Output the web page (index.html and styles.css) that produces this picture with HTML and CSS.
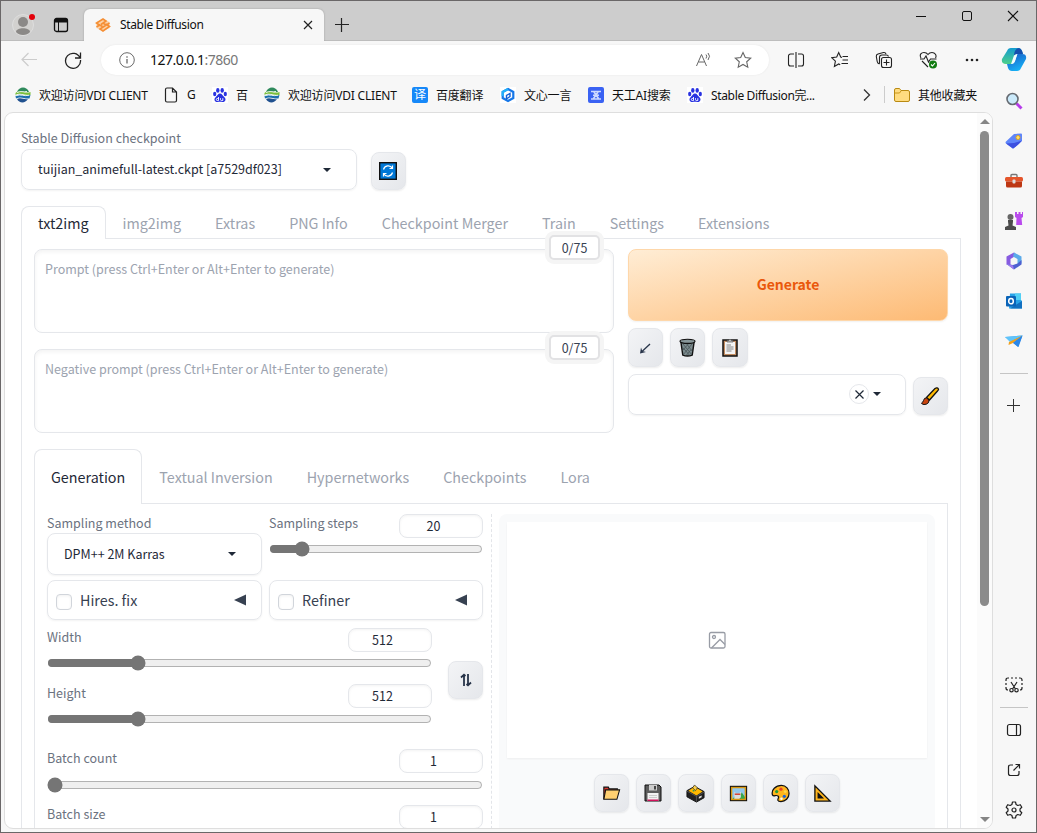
FILE: index.html
```html
<!DOCTYPE html>
<html lang="zh-CN">
<head>
  <meta charset="utf-8">
  <title>Stable Diffusion</title>
  <link rel="stylesheet" href="styles.css">
</head>
<body>
<svg class="defs" width="0" height="0">
  <symbol id="globe" viewBox="0 0 16 16">
    <path d="M2 5C4-1 12-1 14 5z" fill="#2f8a5c"/><path d="M.5 6c4-4 9 1 15-1v3C10 9 6 5 .5 8z" fill="#7bbf3c"/>
    <path d="M.5 9c5-3 9 1 15-1l-1 3.500C9 12 6 9 1 11.500z" fill="#1c6fae"/><path d="M2 12c4-2 7 1 11 0-3 5-9 4-11 0z" fill="#20518f"/>
    <path d="M2 5.500c4-2 6 0 10-1M1 8.700c5-2 8 1 13-.5" stroke="#e8f5ea" fill="none"/>
  </symbol>
  <symbol id="paw" viewBox="0 0 16 16">
    <rect width="16" height="16" fill="#fff"/>
    <g fill="#2932e1"><ellipse cx="2.700" cy="7" rx="1.600" ry="2.200"/><ellipse cx="5.800" cy="3.400" rx="1.700" ry="2.300"/><ellipse cx="10.200" cy="3.400" rx="1.700" ry="2.300"/><ellipse cx="13.300" cy="7" rx="1.600" ry="2.200"/><path d="M8 6.500c2 0 2.600 2 4 3.200 3 2.600 1 5.800-1.700 5.300-1.500-.3-3-.3-4.600 0C3 15.500 1 12.300 4 9.700 5.400 8.500 6 6.500 8 6.500z"/></g>
    <path d="M6.500 10v3.500H5.300a1 1 0 0 1 0-2h1.200M8.500 11.200v1.500q0 .8 1 .8h1.300v-2.300" stroke="#fff" fill="none" stroke-width=".9"/>
  </symbol>
  <symbol id="caret" viewBox="0 0 10 6"><path d="M1 1h8L5 5z" fill="#1f2937"/></symbol>
</svg>
<div class="window">
  <header class="titlebar">
    <svg class="profile" width="24" height="24" viewBox="0 0 24 24"><circle cx="11" cy="13" r="10.500" fill="#d2d1cf" stroke="#dedede"/><circle cx="11" cy="10" r="5" fill="#8b8987"/><path d="M4 20c0-5 14-5 14 0-3 4-11 4-14 0z" fill="#8b8987"/><circle cx="20" cy="5" r="3" fill="#e3000b"/></svg>
    <svg class="workspace" width="16" height="16" viewBox="0 0 16 16"><rect x="1.500" y="1.500" width="13" height="13" rx="2" fill="none" stroke="#111" stroke-width="1.300"/><path d="M2 2h12v3.500H2z" fill="#111"/><path d="M5.500 5v9" stroke="#111"/></svg>
    <div class="tab">
      <svg width="16" height="16" viewBox="0 0 16 16"><path d="M1.500 5 8 2l6.500 3v6L8 14l-6.500-3z" fill="#fbd3aa"/><g fill="none" stroke="#f58f35" stroke-width="1.600"><path d="M5 8.500 1.500 6 8 2l3 2-5 3.500M11 7l3.500 2.500L8 14l-3-2 5.500-3.500M1.500 10l3-2 3 1.500M14.500 6l-3 2-3-1.500"/></g></svg>
      <span class="tab-name">Stable Diffusion</span>
      <svg class="tab-close" width="10" height="10" viewBox="0 0 10 10"><path d="M1 1l8 8M9 1L1 9" stroke="#222" stroke-width="1.200"/></svg>
    </div>
    <svg class="new-tab" width="14" height="14" viewBox="0 0 14 14"><path d="M6.500 0v14M0 6.500h14" stroke="#222" stroke-width="1.200"/></svg>
    <div class="win-buttons">
      <svg width="12" height="12" viewBox="0 0 12 12"><path d="M1 6.500h10" stroke="#111"/></svg>
      <svg width="12" height="12" viewBox="0 0 12 12"><rect x="1.500" y="1.500" width="9" height="9" rx="1.500" fill="none" stroke="#111"/></svg>
      <svg width="12" height="12" viewBox="0 0 12 12"><path d="M1 1l10 10M11 1L1 11" stroke="#111" stroke-width="1.100"/></svg>
    </div>
  </header>

  <div class="below">
    <main class="main">
      <nav class="toolbar">
        <svg class="back" width="16" height="16" viewBox="0 0 16 16" fill="none" stroke="#ccc" stroke-width="1.200"><path d="M16 7.500H1M7.500 1 1 7.500 7.500 14"/></svg>
        <svg class="reload" width="18" height="18" viewBox="0 0 18 18" fill="none" stroke="#222" stroke-width="1.300"><path d="M16 7A7.500 7.500 0 1 0 16.500 9M16.500 1.500V7H11"/></svg>
        <div class="address">
          <svg width="16" height="16" viewBox="0 0 16 16" fill="none" stroke="#6a6a6a"><circle cx="8" cy="8" r="7.300"/><path d="M8 7v4.500M8 4.300v1.400" stroke-width="1.300"/></svg>
          <span class="url">127.0.0.1<i>:7860</i></span>
          <svg class="read" width="17" height="16" viewBox="0 0 17 16" fill="none" stroke="#666"><path d="M1.500 14 6.500 2.500 11.500 14M3.500 10h6M11 2.500q1.500 1.500 0 4M13 1q3 3 0 7"/></svg>
          <svg width="18" height="18" viewBox="0 0 18 18" fill="none" stroke="#666" stroke-width="1.100"><path d="M9 1.500l2.300 5 5.400.6-4 3.700 1.100 5.400L9 13.500l-4.800 2.700 1.100-5.400-4-3.700 5.400-.6z"/></svg>
        </div>
        <div class="tools">
          <svg width="18" height="18" viewBox="0 0 18 18" fill="none" stroke="#222" stroke-width="1.100"><path d="M9 1v16M7 3H3.500a2 2 0 0 0-2 2v8a2 2 0 0 0 2 2H7M11 3h3.500a2 2 0 0 1 2 2v8a2 2 0 0 1-2 2H11"/></svg>
          <svg width="18" height="18" viewBox="0 0 18 18" fill="none" stroke="#222" stroke-width="1.100"><path d="M11 6.500 9.700 6 7.700 1.500 5.700 6l-5 .7 3.700 3.500-1 5.300 4.300-2.500 1.500.8M11.500 5.500H17M11.500 9H17M10.500 12.500H17"/></svg>
          <svg width="18" height="18" viewBox="0 0 18 18" fill="none" stroke="#222" stroke-width="1.100"><rect x="6.500" y="6.500" width="10" height="10" rx="2"/><path d="M11.500 8.500v6M8.500 11.500h6M4.500 13q-2-.5-2.300-2.500L1.300 5.500q-.2-2 1.700-2.500l5.500-1.500q2-.3 2.500 1.500M4.500 12.500V6.500q0-2.500 2.500-2.500h4.500q1.500 0 2 1.500"/></svg>
          <svg width="19" height="18" viewBox="0 0 19 18" fill="none" stroke="#222" stroke-width="1.100"><path d="M2 7C0 3.500 2.500 1.500 5 1.500q2.500 0 4 2 1.500-2 4-2c3 0 5 3 3.500 5.500M1 8h4L7 5l2.500 6L11.500 8h6M3 10l6 6"/><circle cx="14" cy="13.500" r="4" fill="#107c10" stroke="none"/><path d="M12 13.500l1.500 1.500 2.500-3" stroke="#fff"/></svg>
          <svg width="16" height="4" viewBox="0 0 16 4" fill="#222"><circle cx="3" cy="2" r="1.300"/><circle cx="8" cy="2" r="1.300"/><circle cx="13" cy="2" r="1.300"/></svg>
        </div>
      </nav>

      <nav class="bookmarks">
        <a class="bm bm-vdi"><svg width="16" height="16"><use href="#globe"/></svg>欢迎访问VDI CLIENT</a>
        <a class="bm bm-g"><svg width="14" height="16" viewBox="0 0 14 16" fill="none" stroke="#222" stroke-width="1.200"><path d="M1.500 2.500q0-1.500 1.500-1.500h5.500l4 4V13.500q0 1.500-1.500 1.500H3q-1.500 0-1.500-1.500zM8.500 1v4h4"/></svg>G</a>
        <a class="bm bm-bai"><svg width="16" height="16"><use href="#paw"/></svg>百</a>
        <a class="bm bm-vdi2"><svg width="16" height="16"><use href="#globe"/></svg>欢迎访问VDI CLIENT</a>
        <a class="bm bm-fanyi"><b class="yi">译</b>百度翻译</a>
        <a class="bm bm-wenxin"><svg width="16" height="16" viewBox="0 0 16 16"><rect width="16" height="16" fill="#fff"/><path d="M8 2l5.300 3v6L8 14l-5.300-3V5z" fill="none" stroke="#1677e8" stroke-width="2.200"/><path d="M8 2 2.700 5v4" fill="none" stroke="#22b0fa" stroke-width="2.200"/><path d="M6.500 12V8.500l3.500-2v3z" fill="none" stroke="#1560d8" stroke-width="1.400"/></svg>文心一言</a>
        <a class="bm bm-tg"><svg width="16" height="16" viewBox="0 0 16 16"><rect width="16" height="16" rx="2" fill="#3a62f3"/><path d="M3 4.500h10M3 12h10M5 8.200h6M6 5l4.500 6.500M10 5l-4.500 6.500" stroke="#cdd9ff" stroke-width="1.600"/></svg>天工AI搜索</a>
        <a class="bm bm-sd"><svg width="16" height="16"><use href="#paw"/></svg>Stable Diffusion完...</a>
        <svg class="more" width="8" height="12" viewBox="0 0 8 12"><path d="M1 .5 6.500 6 1 11.500" fill="none" stroke="#333" stroke-width="1.300"/></svg>
        <a class="bm bm-other"><svg width="16" height="14" viewBox="0 0 16 14"><path d="M.5 2Q.5.5 2 .5h3.500L7 2.500h7q1.500 0 1.500 1.500v8q0 1.500-1.500 1.500H2Q.5 13.500.5 12z" fill="#ffdc80" stroke="#b98a12"/><path d="M1 5h4.500L7 3" fill="none" stroke="#c9961b"/></svg>其他收藏夹</a>
      </nav>

      <section class="webview">
        <div class="page">
          <div class="label ckpt-label">Stable Diffusion checkpoint</div>
          <div class="row ckpt-row">
            <div class="select ckpt"><span>tuijian_animefull-latest.ckpt [a7529df023]</span><svg width="10" height="6"><use href="#caret"/></svg></div>
            <button class="tool"><svg width="18" height="18" viewBox="0 0 18 18"><rect x=".700" y=".700" width="16.600" height="16.600" fill="#0078d7" stroke="#111" stroke-width="1.400"/><path d="M4.500 7.500a4.800 4.800 0 0 1 8.800-1.300M13.500 10.500a4.800 4.800 0 0 1-8.800 1.300M13.500 3.500v3h-3M4.500 14.500v-3h3" fill="none" stroke="#fff" stroke-width="1.200"/></svg></button>
          </div>

          <div class="tabs tabs-main">
            <span class="on">txt2img</span><span>img2img</span><span>Extras</span><span>PNG Info</span><span>Checkpoint Merger</span><span>Train</span><span>Settings</span><span>Extensions</span>
          </div>

          <div class="panel">
            <div class="top">
              <div class="prompts">
                <div class="prompt">Prompt (press Ctrl+Enter or Alt+Enter to generate)<span class="counter">0/75</span></div>
                <div class="prompt">Negative prompt (press Ctrl+Enter or Alt+Enter to generate)<span class="counter">0/75</span></div>
              </div>
              <div class="actions">
                <button class="generate">Generate</button>
                <div class="row gap">
                  <button class="tool"><svg width="14" height="14" viewBox="0 0 14 14"><path d="M12 3 4 10.500" fill="none" stroke="#273449" stroke-width="1.300"/><path d="M2 12.500 3 6.500l1.300 3.500 3.700 1z" fill="#273449"/></svg></button>
                  <button class="tool"><svg width="17" height="19" viewBox="0 0 18 20"><path d="M2 4l2 14q5 2 10 0l2-14z" fill="#7c8b8e" stroke="#111" stroke-width="1.500"/><path d="M4 6l9 11M8 6l6 8M14 6 5 17M10 6l-6 7M4 10l7 8M13 12l-5 6" stroke="#4b585c" stroke-width=".9"/><ellipse cx="9" cy="3.500" rx="8" ry="2.200" fill="#88979a" stroke="#111" stroke-width="1.200"/></svg></button>
                  <button class="tool wide"><svg width="16" height="19" viewBox="0 0 16 19"><rect x="1" y="2" width="14" height="16" fill="#c08b60" stroke="#111" stroke-width="1.500"/><path d="M3 4h10v12H3z" fill="#f4f4f4"/><path d="M5 4V2.500h1.500Q8-.5 9.500 2.500H11V4z" fill="#bbb" stroke="#555" stroke-width=".7"/><path d="M4.500 7H9M4.500 9h7M4.500 11h7M4.500 13h5" stroke="#777" stroke-width=".9"/></svg></button>
                </div>
                <div class="row gap styles-row">
                  <div class="select styles"><i class="clear"><svg width="9" height="9" viewBox="0 0 9 9"><path d="M.5.5l8 8M8.500.5l-8 8" stroke="#1f2937" stroke-width="1.200"/></svg></i><svg width="10" height="6"><use href="#caret"/></svg></div>
                  <button class="tool"><svg width="20" height="20" viewBox="0 0 20 20"><path d="M6.500 11.500 15 2.500q2.500-1.700 3.500.8-.2 1-1 1.700L9.500 14z" fill="#ffb900" stroke="#111" stroke-width="1.300"/><path d="M1.500 17q1.500-.5 2-2.500.7-3 3-2.500L9 14q0 4.500-5 4.500-2 0-2.500-1.500z" fill="#c9440e" stroke="#111" stroke-width="1"/></svg></button>
                </div>
              </div>
            </div>

            <div class="tabs tabs-extra">
              <span class="on">Generation</span><span>Textual Inversion</span><span>Hypernetworks</span><span>Checkpoints</span><span>Lora</span>
            </div>
            <div class="gen">
              <div class="settings">
                <div class="cols sampling">
                  <div>
                    <div class="label">Sampling method</div>
                    <div class="select sampler"><span>DPM++ 2M Karras</span><svg width="10" height="6"><use href="#caret"/></svg></div>
                  </div>
                  <div class="field">
                    <div class="head"><span class="label">Sampling steps</span><span class="num">20</span></div>
                    <input type="range" min="1" max="150" value="20">
                  </div>
                </div>
                <div class="cols folds">
                  <div class="fold"><i class="check"></i>Hires. fix<svg width="12" height="12" viewBox="0 0 12 12"><path d="M0 6 12 .5v11z" fill="#374151"/></svg></div>
                  <div class="fold"><i class="check"></i>Refiner<svg width="12" height="12" viewBox="0 0 12 12"><path d="M0 6 12 .5v11z" fill="#374151"/></svg></div>
                </div>
                <div class="size">
                  <div class="size-fields">
                    <div class="field"><div class="head"><span class="label">Width</span><span class="num">512</span></div><input type="range" min="64" max="2048" value="512"></div>
                    <div class="field"><div class="head"><span class="label">Height</span><span class="num">512</span></div><input type="range" min="64" max="2048" value="512"></div>
                  </div>
                  <button class="tool swap"><svg width="14" height="14" viewBox="0 0 14 14" fill="none" stroke="#273449" stroke-width="1.800"><path d="M5 13V2M2 4.500 5 1.700 6.500 3M9 1v11M12 9.500l-3 2.800L7.500 11"/></svg></button>
                </div>
                <div class="batch">
                  <div class="field"><div class="head"><span class="label">Batch count</span><span class="num">1</span></div><input type="range" min="1" max="100" value="1"></div>
                  <div class="field"><div class="head"><span class="label">Batch size</span><span class="num">1</span></div><input type="range" min="1" max="8" value="1"></div>
                </div>
              </div>
              <div class="results">
                <div class="gallery"><svg width="18" height="18" viewBox="0 0 18 18" fill="none" stroke="#989ca5" stroke-width="1.300"><rect x="1.500" y="1.500" width="15.500" height="15.500" rx="1.500"/><circle cx="6" cy="6" r="1.500"/><path d="M3.500 17 12 8.500l5 5"/></svg></div>
                <div class="row gap outputs">
                  <button class="tool"><svg width="19" height="18" viewBox="0 0 20 20"><path d="M1.500 17V3.500h5l1 2h9V8" fill="#d9342b" stroke="#111" stroke-width="1.300"/><path d="M1.500 17 3.500 6.500H19l-3 10.500z" fill="#ffd071" stroke="#111" stroke-width="1.200"/></svg></button>
                  <button class="tool"><svg width="18" height="18" viewBox="0 0 18 18"><path d="M1 1h14l2 2v14H1z" fill="#5c5c5c" stroke="#111"/><path d="M5 1h8v5.500H5z" fill="#ccc"/><path d="M10 2h2v3.500h-2z" fill="#444"/><path d="M3.500 9h11v8h-11z" fill="#f2f2f2"/><path d="M3.500 15.500h11V17h-11z" fill="#d0105a"/><path d="M5 11.500h8M5 13.500h8" stroke="#ccc"/></svg></button>
                  <button class="tool wide"><svg width="19" height="19" viewBox="0 0 20 20"><path d="M1 7l8-4.500L19 8v6.500L11 19 1 13.500z" fill="#222" stroke="#111"/><path d="M2.500 7 9 3l8.500 5L11 12z" fill="#ffb900"/><path d="M7 4 9 1l3 3-2 3z" fill="#fcd14c" stroke="#222" stroke-width=".7"/><path d="M11 12v6.500M1 7.500l10 5.500 8-4.500" stroke="#555" fill="none"/><path d="M13.500 13.500l3-1.500v2l-3 1.500z" fill="#ddd"/><circle cx="8" cy="7" r="1" fill="#3c9b48"/></svg></button>
                  <button class="tool"><svg width="19" height="17" viewBox="0 0 20 18"><rect x="1.500" y="1.500" width="17" height="15" fill="#92c8ed" stroke="#111" stroke-width="1.300"/><path d="M3.500 15l4-5 3 3 3-5 3.500 5v2z" fill="#36a84b"/><path d="M5.500 15V7l2 2h3l2-2v6l-2 2z" fill="#ddd"/><path d="M6 9h6v1.500H6z" fill="#d33c2d"/><rect x="2.700" y="2.700" width="14.600" height="12.600" fill="none" stroke="#d99710" stroke-width="1.500"/></svg></button>
                  <button class="tool"><svg width="19" height="19" viewBox="0 0 20 20"><path d="M7 12.500C5 11 3 14 1.500 11.500 0 6 5 1.500 11 1.500c5 0 8 4 8 8.500 0 5-4 8.500-8.500 8.500-5 0-3-3-2.500-4.500q.2-1-1-1.500z" fill="#ffb51c" stroke="#111" stroke-width="1.300"/><circle cx="10.500" cy="5.500" r="1.700" fill="#e34329"/><circle cx="6" cy="8" r="1.700" fill="#269b36"/><circle cx="15" cy="8" r="1.500" fill="#ffda4c"/><circle cx="14" cy="13" r="1.700" fill="#2064d6"/><circle cx="11" cy="15.500" r="1.300" fill="#fff"/></svg></button>
                  <button class="tool"><svg width="19" height="19" viewBox="0 0 20 20"><path d="M2 2v16h16zM5.500 10v4.500H10z" fill="#ffb51c" fill-rule="evenodd" stroke="#111" stroke-width="1.400"/><path d="M5.500 10v4.500H10z" fill="#111"/></svg></button>
                </div>
              </div>
            </div>
          </div>
        </div>
        <div class="scrollbar"><i class="up"></i><i class="thumb"></i><i class="down"></i></div>
      </section>
    </main>

    <aside class="sidebar">
      <svg width="26" height="26" viewBox="0 0 26 26">
        <defs><linearGradient id="cpl" x2="0" y2="1"><stop stop-color="#139bd0"/><stop offset="1" stop-color="#4fd08a"/></linearGradient><linearGradient id="cpr" x2=".5" y2="1"><stop stop-color="#1b57c4"/><stop offset="1" stop-color="#16b0f5"/></linearGradient></defs>
        <path d="M6 4q1-3 4-3h7q3 0 4 3l1 3h-5q-3 0-4 3l-2 7H5q-5 0-4-5z" fill="url(#cpl)"/>
        <path d="M20 21q-1 3-4 3h-5q-3 0-4-3l-1-4h4q3 0 4-3l2-7h5q5 0 4 5z" fill="url(#cpr)"/>
        <path d="M18 1q3 1 4 6h-6l-3 2q0-7 5-8z" fill="#164fae"/>
        <path d="M13 8.500q1-1.500 3.500-1.500L14 14q-1 3-4 3z" fill="#f4fdff"/>
      </svg>
      <svg width="18" height="18" viewBox="0 0 18 18"><path d="M11.500 11.500l5 5" stroke="#b73bea" stroke-width="3"/><circle cx="7.500" cy="7" r="5.500" fill="#cbeafb" stroke="#666b72" stroke-width="1.600"/></svg>
      <svg width="18" height="18" viewBox="0 0 18 18"><path d="M1 9.500 9 2l7-.5q1 0 1 1V9l-8 7q-1 1-2 0l-6-4.500q-1-1 0-2z" fill="#5f86fa"/><path d="M1 11.500l7 5q5-3 9-8L9 11z" fill="#3c50e0"/><circle cx="13" cy="5.500" r="2" fill="#ffe06a" stroke="#e0a51c"/></svg>
      <svg width="18" height="18" viewBox="0 0 18 18"><path d="M6 5V3.500q0-1 1-1h4q1 0 1 1V5" fill="none" stroke="#777" stroke-width="1.400"/><rect y="5" width="18" height="4.500" rx="1.500" fill="#e4552b"/><path d="M1 9.500h16V14q0 1.500-1.500 1.500h-13Q1 15.500 1 14z" fill="#bd3713"/><rect x="7.500" y="7.500" width="3" height="4" rx="1" fill="#ddd"/></svg>
      <svg width="18" height="18" viewBox="0 0 18 18"><path d="M10 0h2v2h1.500V0h2v2H17V0h1v5l-1.500 1 .7 7h-6l.3-7L10 5z" fill="#b94bed"/><circle cx="5.500" cy="5" r="3" fill="#666"/><path d="M3 8h5v1.500l-.5 4L11 15v3H0v-3l3.500-1.500-.5-4z" fill="#4c4c4c"/></svg>
      <svg width="18" height="18" viewBox="0 0 18 18"><path d="M9 .5 1.500 4.500v8L5.500 13V7L12 3z" fill="#875be0"/><path d="M9 .5l7.500 4v7L12.500 12V7L8 4.500z" fill="#5cabea"/><path d="M1.500 12 9 17.500l7.500-5V8l-4 3.500L8 13z" fill="#4f61d0"/><path d="M1.500 12l6.500 1.500 1 4z" fill="#a07af0"/></svg>
      <svg width="18" height="18" viewBox="0 0 18 18"><path d="M5 1.500h11V8l1 1v7.500H4z" fill="#28a3e8"/><path d="M10 1.500h6V8h-6z" fill="#50d0f5"/><path d="M5 16.500 17 9v7.500z" fill="#1270c0"/><rect x="1" y="4" width="10" height="10.500" rx="1" fill="#0a64b8"/><ellipse cx="6" cy="9.200" rx="2.300" ry="2.600" fill="none" stroke="#fff" stroke-width="1.500"/></svg>
      <svg width="18" height="18" viewBox="0 0 18 18"><path d="M0 5 17.500 3.500 13 15 8.500 11z" fill="#329bf0"/><path d="M0 5l17.500-1.500L5 10z" fill="#5fc4fa"/><path d="M3.500 13 4 10l13.500-6.500L8 11z" fill="#f4a019"/><path d="M8 11l9.500-7.500L13.500 15z" fill="#2a86e8"/></svg>
      <hr>
      <svg class="add" width="13" height="13" viewBox="0 0 13 13"><path d="M6.500 0v13M0 6.500h13" stroke="#333"/></svg>
      <div class="side-bottom">
        <svg width="18" height="16" viewBox="0 0 18 16" fill="none" stroke="#222" stroke-width="1.200"><path d="M1 4V3q0-2 2-2h1M6 1h2M10 1h2M14 1h1q2 0 2 2v1M1 6v2M17 6v2M1 10v1q0 2 2 2M17 10v1q0 2-2 2M6 5l4.500 7M12 5l-4.500 7"/><circle cx="6.500" cy="13.200" r="1.700"/><circle cx="11.500" cy="13.200" r="1.700"/></svg>
        <hr>
        <svg width="16" height="16" viewBox="0 0 16 16" fill="none" stroke="#222" stroke-width="1.200"><rect x="1.500" y="2.500" width="13" height="11" rx="2"/><path d="M10.500 2.500v11"/></svg>
        <svg width="14" height="14" viewBox="0 0 14 14" fill="none" stroke="#222" stroke-width="1.200"><path d="M6 2H3.500q-2 0-2 2v6.500q0 2 2 2H10q2 0 2-2V8M8.500 1.500h4v4M12.500 1.500 6.500 7.500"/></svg>
        <svg width="18" height="18" viewBox="0 0 18 18" fill="none" stroke="#222" stroke-width="1.200"><path d="M7.500 1h3l.6 2.500 1.700 1 2.500-.8 1.500 2.600L15 8v2l1.800 1.700-1.500 2.600-2.500-.8-1.700 1-.6 2.500h-3l-.6-2.500-1.700-1-2.500.8-1.500-2.600L3 10V8L1.200 6.300l1.500-2.600 2.500.8 1.700-1z" stroke-linejoin="round"/><circle cx="9" cy="9" r="2"/></svg>
      </div>
    </aside>
  </div>
</div>
</body>
</html>
```
FILE: styles.css
```css
*{
  box-sizing: border-box;
}
body{
  margin: 0;
  overflow: hidden;
  font-family: "Noto Sans", "Noto Sans CJK SC", sans-serif;
  font-size: 12px;
  color: #111;
}
svg{
  display: block;
  flex: none;
}
i{
  font-style: normal;
}
.defs{
  position: absolute;
}
.window{
  width: 1037px;
  height: 833px;
  border: 1px solid #6a6768;
  background: #f7f7f7;
  display: flex;
  flex-direction: column;
}

/* browser frame */
.titlebar{
  height: 40px;
  flex: none;
  background: #cdcdcd;
  border-bottom: 1px solid #bdbdbd;
  display: flex;
}
.profile{
  margin: 11px 0 0 11px;
}
.workspace{
  margin: 16px 15px 0 17px;
}
.tab{
  width: 240px;
  height: 32px;
  margin-top: 8px;
  padding: 0 11px 1px;
  background: #f7f7f7;
  border-radius: 6px 6px 0 0;
  box-shadow: 0 0 2px #999;
  clip-path: inset(-3px -3px 0 -3px);
  display: flex;
  align-items: center;
}
.tab-name{
  margin-left: 9px;
  flex: 1;
  letter-spacing: -.35px;
}
.tab-close{
  margin-top: 1px;
}
.new-tab{
  margin: 17px 0 0 11px;
}
.win-buttons{
  margin: 9px 17px 0 auto;
  display: flex;
  gap: 34px;
}
.below{
  flex: 1;
  display: flex;
  min-height: 0;
}
.main{
  width: 992px;
  flex: none;
  display: flex;
  flex-direction: column;
  min-height: 0;
}
.toolbar{
  height: 38px;
  flex: none;
  display: flex;
  align-items: center;
}
.back{
  margin-left: 20px;
}
.reload{
  margin: 0 19px 0 27px;
}
.address{
  width: 668px;
  height: 30px;
  background: #fff;
  border-radius: 15px;
  box-shadow: 0 0 2px #e4e4e4;
  display: flex;
  align-items: center;
  padding: 0 17px 0 18px;
}
.url{
  margin: 0 0 2px 15px;
  flex: 1;
  font-size: 14px;
  letter-spacing: -.53px;
}
.url i{
  color: #777;
}
.read{
  margin-right: 22px;
}
.tools{
  margin-left: 18px;
  display: flex;
  align-items: center;
  gap: 26px;
}
.bookmarks{
  height: 33px;
  flex: none;
  display: flex;
  align-items: center;
  padding: 0 0 2px 14px;
  white-space: nowrap;
}
.bm{
  display: flex;
  align-items: center;
  gap: 8px;
  letter-spacing: -.2px;
}
.bm-vdi{
  width: 149px;
}
.bm-g{
  width: 48px;
  gap: 9px;
}
.bm-bai{
  width: 52px;
}
.bm-vdi2{
  width: 148px;
}
.bm-fanyi, .bm-wenxin{
  width: 88px;
}
.bm-tg{
  width: 99px;
}
.bm-sd{
  width: 176px;
  letter-spacing: -.35px;
}
.yi{
  width: 16px;
  height: 16px;
  background: #1688f8;
  border-radius: 2px;
  color: #fff;
  font-size: 12px;
  line-height: 15px;
  font-weight: normal;
  text-align: center;
}
.bm-other{
  margin-left: 13px;
  padding-left: 9px;
  border-left: 1px solid #ccc;
  height: 17px;
}
.webview{
  margin: 0 0 3px 3px;
  flex: 1;
  min-height: 0;
  border: 1px solid #dedede;
  border-radius: 9px;
  background: #fff;
  overflow: hidden;
  display: flex;
  justify-content: space-between;
}
.scrollbar{
  width: 15px;
  background: #fbfbfb;
  display: flex;
  flex-direction: column;
  align-items: center;
  padding: 6px 0 6px;
}
.thumb{
  width: 9px;
  height: 475px;
  margin-top: 6px;
  border-radius: 5px;
  background: #8b8b8b;
}
.up, .down{
  border: 5px solid transparent;
  border-top-width: 0;
  border-bottom: 5px solid #858585;
}
.thumb{
  margin-top: 7px;
}
.down{
  margin-top: auto;
  transform: rotate(180deg);
}
.sidebar{
  width: 41px;
  display: flex;
  flex-direction: column;
  align-items: center;
  padding-top: 6px;
}
.sidebar > svg{
  margin-bottom: 22px;
}
.sidebar > svg:first-child{
  margin-bottom: 19px;
}
.sidebar hr{
  width: 28px;
  height: 1px;
  border: 0;
  background: #c5c5c5;
  margin: 1px 0 25px;
}
.side-bottom{
  margin-top: auto;
  display: flex;
  flex-direction: column;
  align-items: center;
  padding-bottom: 13px;
}
.side-bottom hr{
  margin: 14px 0;
}
.side-bottom svg:nth-of-type(3){
  margin: 25px 0 24px;
}

/* web page. the CJK face carries the same latin as Source Sans, a bit larger */
.page{
  width: 940px;
  margin-left: 16px;
  padding-top: 15px;
  font-family: "Noto Sans CJK SC", sans-serif;
  font-size: 12.530px;
  color: #1f2937;
  white-space: nowrap;
}
.row{
  display: flex;
}
.gap{
  gap: 7px;
}
.label{
  color: #6b7280;
  height: 20px;
  line-height: 18px;
}
.ckpt-label{
  line-height: 20px;
}
.select{
  border: 1px solid #e5e7eb;
  border-radius: 8px;
  box-shadow: 0 1px 2px rgba(0,0,0,.05);
  display: flex;
  align-items: center;
  justify-content: space-between;
}
.select span{
  margin-bottom: 2px;
}
.ckpt-row{
  gap: 14px;
  align-items: flex-end;
  height: 42px;
}
.ckpt{
  width: 336px;
  height: 41px;
  padding: 0 24px 0 16px;
}
.tool{
  width: 35px;
  height: 38px;
  padding: 0 1px 0 0;
  flex: none;
  border: 1px solid #e5e7eb;
  border-radius: 8px;
  background: linear-gradient(to bottom right, #f3f4f6, #e5e7eb);
  box-shadow: 0 1px 2px rgba(0,0,0,.08);
  display: flex;
  align-items: center;
  justify-content: center;
}
.wide{
  width: 36px;
}
.tabs{
  display: flex;
  font-size: 14.330px;
  color: #9ca3af;
  box-shadow: inset 0 -1px #e5e7eb;
}
.tabs span{
  padding: 0 16px;
  border: 1px solid transparent;
  border-bottom: 0;
}
.tabs .on{
  color: #1f2937;
  background: #fff;
  border-color: #e5e7eb;
  border-radius: 8px 8px 0 0;
}
.tabs-main{
  height: 33px;
  margin-top: 16px;
  line-height: 31px;
}
.panel{
  border: solid #e5e7eb;
  border-width: 0 1px;
  padding: 10px 12px 0;
}
.top{
  display: flex;
  gap: 14px;
}
.prompts{
  width: 580px;
  display: flex;
  flex-direction: column;
  gap: 16px;
}
.prompt{
  position: relative;
  height: 84px;
  border: 1px solid #e5e7eb;
  border-radius: 8px;
  box-shadow: inset 0 2px 4px rgba(0,0,0,.05);
  padding: 9px 10px;
  color: #9ca3af;
  line-height: 20px;
}
.counter{
  position: absolute;
  right: 13px;
  top: -15px;
  width: 51px;
  height: 25px;
  border: 2px solid #e2e2e4;
  border-radius: 5px;
  background: #fff;
  box-shadow: 0 0 0 4px #f5f5f5;
  color: #374151;
  text-align: center;
  line-height: 21px;
}
.actions{
  width: 320px;
  display: flex;
  flex-direction: column;
  gap: 7px;
}
.generate{
  height: 72px;
  padding-bottom: 3px;
  border: 1px solid #fed7aa;
  border-radius: 8px;
  background: linear-gradient(to bottom right, #ffedd5, #fdba74);
  box-shadow: 0 1px 2px rgba(0,0,0,.06);
  color: #ea580c;
  font: bold 14px "Noto Sans CJK SC", sans-serif;
}
.actions .tool{
  height: 39px;
}
.styles-row{
  align-items: flex-end;
}
.styles-row .tool{
  height: 38px;
}
.styles{
  width: 278px;
  height: 41px;
  justify-content: flex-end;
  gap: 3px;
  padding: 0 23px 1px 0;
}
.clear{
  width: 20px;
  height: 20px;
  border: 1px solid #e5e7eb;
  border-radius: 50%;
  display: flex;
  align-items: center;
  justify-content: center;
}
.tabs-extra{
  height: 55px;
  margin-top: 16px;
  line-height: 54px;
}
.gen{
  border: solid #e5e7eb;
  border-width: 0 1px;
  height: 330px;
  padding: 10px 12px 0;
  display: flex;
}
.settings{
  width: 445px;
  padding-right: 8px;
  border-right: 1px dashed #e3e5e9;
}
.cols{
  display: grid;
  grid-template-columns: 215px 214px;
  gap: 7px;
}
.sampling{
  height: 66px;
}
.sampler{
  height: 42px;
  padding: 0 24px 0 16px;
}
.sampling .label{
  height: 19px;
  line-height: 17px;
}
.head{
  display: flex;
  justify-content: space-between;
  height: 24px;
}
.num{
  width: 84px;
  height: 24px;
  border: 1px solid #e5e7eb;
  border-radius: 8px;
  box-shadow: inset 0 1px 3px rgba(0,0,0,.05);
  line-height: 22px;
  text-align: center;
  padding-right: 15px;
}
input[type=range]{
  display: block;
  width: 100%;
  height: 16px;
  margin: 3px 0 0;
  accent-color: #757575;
}
.fold{
  height: 40px;
  border: 1px solid #e5e7eb;
  border-radius: 8px;
  box-shadow: 0 1px 2px rgba(0,0,0,.05);
  display: flex;
  align-items: center;
  padding: 0 15px 2px 8px;
  font-size: 14.330px;
  color: #374151;
}
.fold svg{
  margin: 1px 0 0 auto;
}
.check{
  width: 16px;
  height: 16px;
  margin: 5px 8px 0 0;
  border: 1px solid #d1d5db;
  border-radius: 4px;
  box-shadow: inset 0 1px 3px rgba(0,0,0,.06);
}
.size{
  display: flex;
  align-items: center;
  gap: 16px;
  margin-top: 8px;
}
.size-fields{
  width: 385px;
}
.size .field, .batch .field{
  height: 56px;
}
.swap{
  margin-bottom: 8px;
  padding: 0;
}
.batch{
  margin-top: 9px;
}
.batch input[type=range]{
  margin-top: 4px;
}
.results{
  width: 436px;
  margin-left: 7px;
  background: #f9fafb;
  border-radius: 8px;
  padding: 8px;
}
.gallery{
  height: 236px;
  background: #fff;
  box-shadow: 0 1px 2px rgba(0,0,0,.05);
  display: flex;
  align-items: center;
  justify-content: center;
}
.outputs{
  justify-content: center;
  margin-top: 16px;
}
```
